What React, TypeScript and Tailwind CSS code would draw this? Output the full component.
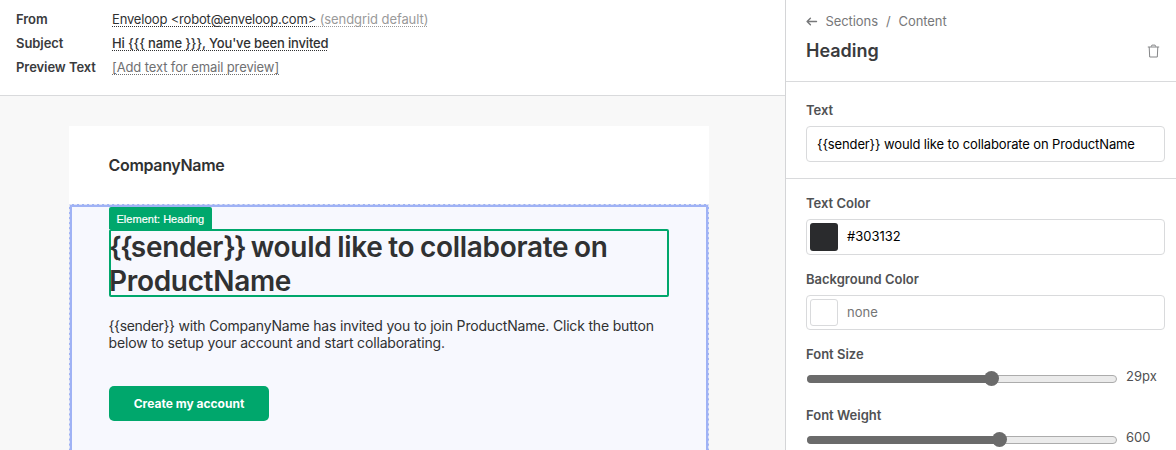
import React from "react";

function MetaRow({ label, children }: { label: string; children: React.ReactNode }) {
  return (
    <div className="flex h-6 items-center whitespace-nowrap">
      <dt className="w-24 shrink-0 font-semibold tracking-[-0.06px] text-[#3a3b3d]">{label}</dt>
      <dd className="underline decoration-dotted decoration-1 underline-offset-2 [text-decoration-skip-ink:none]">
        {children}
      </dd>
    </div>
  );
}

function Slider({ label, value, fill, knob }: { label: string; value: string; fill: string; knob: string }) {
  return (
    <div className="h-[61px]">
      <div className="h-4 font-semibold leading-4 text-[#505153]">{label}</div>
      <div className="flex h-[26px] items-center">
        <div className="relative mt-[7px] ml-px h-2 w-[310px] rounded-full border border-[#acacac] bg-[#ebebeb]">
          <div className={`absolute -top-px -left-px h-2 rounded-full bg-[#6b6b6b] ${fill}`} />
          <div className={`absolute -top-[5px] h-[15px] w-[15px] rounded-full bg-[#6b6b6b] ${knob}`} />
        </div>
        <span className="ml-[9px] mt-1 text-[#505153]">{value}</span>
      </div>
    </div>
  );
}

function Preview() {
  return (
    <main className="flex w-[785px] shrink-0 flex-col bg-[#f8f8f8]">
      <dl className="h-24 shrink-0 border-b border-[#d9dadc] bg-white px-4 pt-2">
        <MetaRow label="From">
          <span className="tracking-[-0.18px]">Enveloop &lt;robot@enveloop.com&gt;</span>
          <span className="tracking-[-0.08px] text-[#9a9a9a] underline decoration-dotted decoration-1 underline-offset-2"> (sendgrid default)</span>
        </MetaRow>
        <MetaRow label="Subject">
          <span className="font-medium tracking-[-0.14px]">{"Hi {{{ name }}}, You've been invited"}</span>
        </MetaRow>
        <MetaRow label="Preview Text">
          <span className="tracking-[-0.11px] text-[#6f7072] underline decoration-dotted decoration-1 underline-offset-2">[Add text for email preview]</span>
        </MetaRow>
      </dl>

      <div className="ml-[69px] mt-[30px] flex w-[640px] grow flex-col bg-white">
        <div className="flex h-[78px] shrink-0 items-center pl-[39.5px] text-base font-semibold tracking-[-0.32px]">
          CompanyName
        </div>
        <section className="h-[300px] border border-dashed border-[#dfe4f5] bg-[#9fb2f5]">
          <div className="m-px h-full rounded-[1px] border border-[#9fb2f5] bg-[#f7f8fe] pl-[37px]">
            <div className="flex h-[22px] w-[103px] items-center rounded-t-[2px] bg-[#00a76c] pl-[7.5px] pt-[3px] font-['Liberation_Sans',sans-serif] text-[11px] tracking-[0.02px] whitespace-nowrap text-white [-webkit-text-stroke:0.2px_white]">
              Element: Heading
            </div>
            <h1 className="h-[68px] w-[560px] rounded-[2px] border-2 border-[#00a76c] text-[28px] leading-[34px] font-semibold tracking-[-0.32px] whitespace-nowrap [word-spacing:-0.9px]">
              <span className="-mt-px -ml-[2px] block">
                <span className="tracking-[-1.8px]">{"{{"}</span>sender
                <span className="tracking-[-1.8px]">{"}}"}</span>
                {" would like to collaborate on"}
                <br />
                ProductName
              </span>
            </h1>
            <p className="mt-5 -ml-[0.5px] text-sm leading-[17px] tracking-[-0.18px] whitespace-nowrap">
              <span className="tracking-[-0.35px]">{"{{sender}}"}</span>
              {" with CompanyName has invited you to join ProductName. Click the button"}
              <br />
              <span className="tracking-[-0.16px]">below to setup your account and start collaborating.</span>
            </p>
            <button className="mt-[35px] block h-[35px] w-40 rounded-[5px] bg-[#00a76c] pt-px text-xs font-bold text-white">
              Create my account
            </button>
          </div>
        </section>
      </div>
    </main>
  );
}

function Inspector() {
  return (
    <aside className="w-[391px] shrink-0 border-l border-[#d4d5d7] bg-white">
      <header className="h-[82px] border-b border-[#d9dadc] pl-5 pt-[14px]">
        <nav className="flex h-4 items-center tracking-[-0.08px] text-[#77787a]">
          <svg width="12" height="10" viewBox="0 0 12 10" fill="none" stroke="currentColor" strokeWidth="1.4" strokeLinecap="round" strokeLinejoin="round">
            <path d="M10.5 4.5H1.2M4.4 1.3L1.1 4.5l3.3 3.2" />
          </svg>
          <span className="ml-[7.5px]">Sections</span>
          <span className="ml-2">/</span>
          <span className="ml-2">Content</span>
        </nav>
        <div className="mt-[9px] flex h-6 items-center justify-between pr-4">
          <h2 className="text-lg font-semibold text-[#3a3b3d]">Heading</h2>
          <svg width="13" height="14" viewBox="0 0 13 14" fill="none" stroke="#858688" strokeLinejoin="round">
            <path d="M.8 3h11.4M4.2 2.7l.7-1.6h3.2l.7 1.6M2.2 3l.5 10h7.6l.5-10" />
          </svg>
        </div>
      </header>
      <div className="h-[97px] border-b border-[#d9dadc] pl-5 pt-5 pr-[11px]">
        <div className="h-4 font-semibold leading-4 text-[#505153]">Text</div>
        <div className="mt-2 flex h-9 items-center rounded border border-[#d9dadc] pl-[10px] pt-px tracking-[-0.13px] text-black">
          {"{{sender}} would like to collaborate on ProductName"}
        </div>
      </div>
      <div className="pl-5 pr-[11px] pt-4">
        <div className="h-4 font-semibold leading-4 text-[#505153]">Text Color</div>
        <div className="mt-2 flex h-9 items-center rounded border border-[#d9dadc] pl-[3px] text-black">
          <span className="mr-[9px] h-7 w-7 rounded-[3px] bg-[#2a2b2d]" />
          #303132
        </div>
        <div className="mt-4 h-4 font-semibold leading-4 text-[#505153]">Background Color</div>
        <div className="mt-2 flex h-[35px] items-center rounded border border-[#d9dadc] pl-[3px] text-[#757575]">
          <span className="mr-[9px] h-[27px] w-7 rounded-[3px] border border-[#d9dadc]" />
          none
        </div>
        <div className="mt-4">
          <Slider label="Font Size" value="29px" fill="w-[184px]" knob="left-[176px]" />
          <Slider label="Font Weight" value="600" fill="w-[192px]" knob="left-[184px]" />
        </div>
      </div>
    </aside>
  );
}

export default function App() {
  return (
    <div className="flex h-[450px] w-[1176px] overflow-hidden bg-white font-['Inter',sans-serif] text-[13px] text-[#303132]">
      <Preview />
      <Inspector />
    </div>
  );
}
